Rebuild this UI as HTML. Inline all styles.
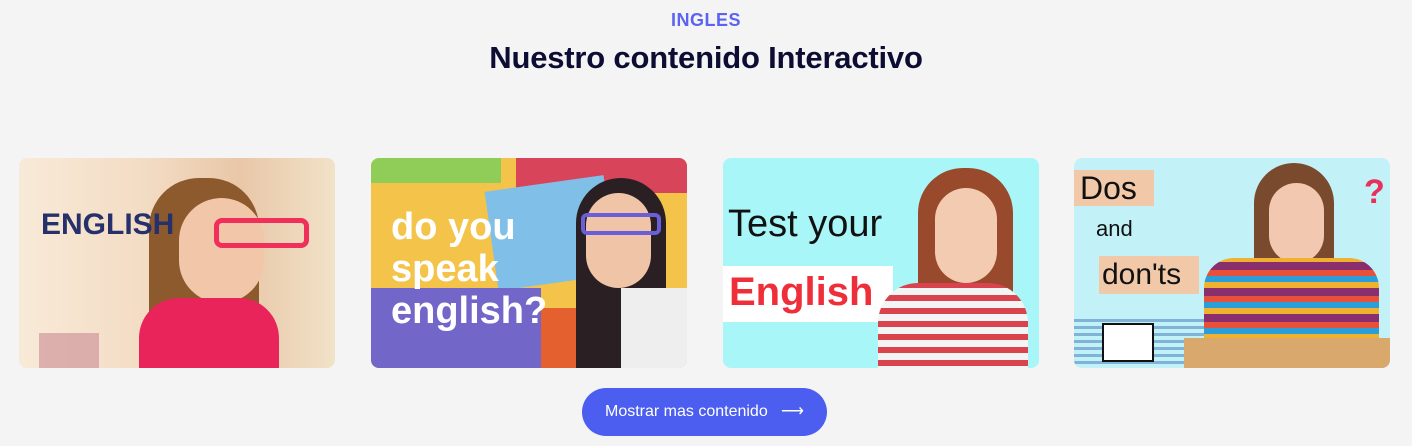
<!DOCTYPE html>
<html><head><meta charset="utf-8"><style>
body{margin:0;width:1412px;height:446px;background:#f4f4f4;font-family:"Liberation Sans",sans-serif;position:relative;overflow:hidden}
.t1{position:absolute;top:10px;left:0;width:1412px;text-align:center;color:#5c63f2;font-size:18px;font-weight:bold;letter-spacing:.5px}
.t2{position:absolute;top:40px;left:0;width:1412px;text-align:center;color:#0d0d33;font-size:31px;font-weight:bold;letter-spacing:-.2px}
.c{position:absolute;top:158px;width:316px;height:210px;border-radius:8px;overflow:hidden}
.btn{position:absolute;left:582px;top:388px;width:245px;height:48px;border-radius:24px;background:#4b5ef0;color:#fff;font-size:16px;line-height:48px;text-align:center}
.hand{font-family:"Liberation Sans",sans-serif;position:absolute}
</style></head><body>
<div class="t1">INGLES</div>
<div class="t2">Nuestro contenido Interactivo</div>

<div class="c" style="left:19px;background:linear-gradient(90deg,#f8ead8 0%,#f3dcc4 40%,#e9c7a8 70%,#f1e2c8 100%)">
 <div style="position:absolute;left:130px;top:20px;width:110px;height:200px;border-radius:50px 50px 0 0;background:#8d5a2e"></div>
 <div style="position:absolute;left:160px;top:40px;width:85px;height:105px;border-radius:45px;background:#f2c6a8"></div>
 <div style="position:absolute;left:195px;top:60px;width:95px;height:30px;border:5px solid #f0305a;border-radius:8px;box-sizing:border-box"></div>
 <div style="position:absolute;left:120px;top:140px;width:140px;height:80px;border-radius:40px 40px 0 0;background:#e8245a"></div>
 <div class="hand" style="left:22px;top:50px;font-size:30px;color:#26306a;font-weight:bold">ENGLISH</div>
 <div style="position:absolute;left:20px;top:175px;width:60px;height:35px;background:#c98a95;opacity:.6"></div>
</div>

<div class="c" style="left:371px;background:#f4c34a">
 <div style="position:absolute;left:0;top:0;width:130px;height:25px;background:#8fcd58"></div>
 <div style="position:absolute;left:145px;top:0;width:171px;height:35px;background:#d8455a"></div>
 <div style="position:absolute;left:120px;top:25px;width:120px;height:100px;background:#7fbfe8;transform:rotate(-8deg)"></div>
 <div style="position:absolute;left:0;top:130px;width:170px;height:90px;background:#7266c8"></div>
 <div style="position:absolute;left:170px;top:150px;width:100px;height:70px;background:#e5602f"></div>
 <div style="position:absolute;left:205px;top:20px;width:90px;height:200px;border-radius:45px 45px 0 0;background:#2a1f22"></div>
 <div style="position:absolute;left:215px;top:35px;width:65px;height:95px;border-radius:35px;background:#f0c4a7"></div>
 <div style="position:absolute;left:210px;top:55px;width:80px;height:22px;border:4px solid #6a5fd8;border-radius:6px;box-sizing:border-box"></div>
 <div style="position:absolute;left:250px;top:130px;width:66px;height:80px;background:#eee"></div>
 <div class="hand" style="left:20px;top:48px;font-size:38px;line-height:42px;color:#fff;font-weight:bold">do you<br>speak<br>english?</div>
</div>

<div class="c" style="left:723px;background:#a8f6f8">
 <div class="hand" style="left:5px;top:45px;font-size:38px;color:#111">Test your</div>
 <div style="position:absolute;left:0;top:108px;width:170px;height:56px;background:#fff"></div>
 <div class="hand" style="left:6px;top:112px;font-size:40px;color:#ee2f3a;font-weight:bold">English</div>
 <div style="position:absolute;left:195px;top:10px;width:95px;height:200px;border-radius:45px 45px 0 0;background:#9a4a2c"></div>
 <div style="position:absolute;left:212px;top:30px;width:62px;height:95px;border-radius:32px;background:#f2cbb0"></div>
 <div style="position:absolute;left:155px;top:125px;width:150px;height:90px;border-radius:40px 40px 0 0;background:repeating-linear-gradient(0deg,#f4f4f4 0 7px,#d9434e 7px 13px)"></div>
</div>

<div class="c" style="left:1074px;background:#c2f2f8">
 <div style="position:absolute;left:0;top:12px;width:80px;height:36px;background:#f2c9a8"></div>
 <div class="hand" style="left:6px;top:12px;font-size:32px;color:#111">Dos</div>
 <div class="hand" style="left:22px;top:58px;font-size:22px;color:#111">and</div>
 <div style="position:absolute;left:25px;top:98px;width:100px;height:38px;background:#f2c9a8"></div>
 <div class="hand" style="left:28px;top:100px;font-size:30px;color:#111">don'ts</div>
 <div class="hand" style="left:290px;top:15px;font-size:34px;color:#e8305a;font-weight:bold">?</div>
 <div style="position:absolute;left:0;top:160px;width:130px;height:50px;background:repeating-linear-gradient(0deg,#c2f2f8 0 4px,#7fb3d8 4px 7px)"></div>
 <div style="position:absolute;left:28px;top:165px;width:48px;height:35px;background:#fff;border:2px solid #111"></div>
 <div style="position:absolute;left:180px;top:5px;width:80px;height:150px;border-radius:40px 40px 0 0;background:#7a4a2e"></div>
 <div style="position:absolute;left:195px;top:25px;width:55px;height:80px;border-radius:28px;background:#f2c9b0"></div>
 <div style="position:absolute;left:130px;top:100px;width:175px;height:90px;border-radius:30px 30px 0 0;background:repeating-linear-gradient(0deg,#8a2f6e 0 8px,#f0b030 8px 14px,#2a9ed8 14px 20px,#e8503a 20px 26px)"></div>
 <div style="position:absolute;left:110px;top:180px;width:206px;height:30px;background:#d9a86c"></div>
</div>

<div class="btn">Mostrar mas contenido &nbsp;&nbsp;⟶</div>
</body></html>
